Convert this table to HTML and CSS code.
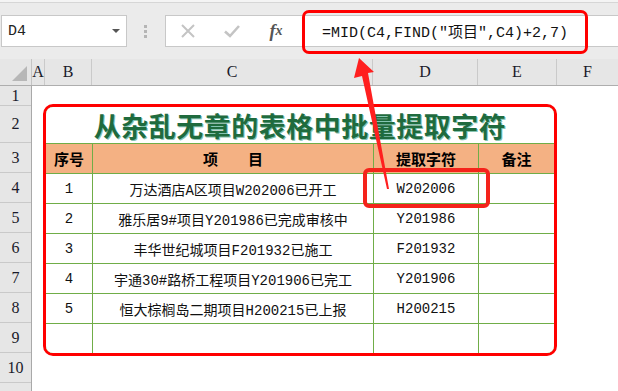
FILE: index.html
```html
<!DOCTYPE html>
<html lang="zh">
<head>
<meta charset="utf-8">
<title>MID FIND</title>
<link rel="stylesheet" href="styles.css">
</head>
<body>
<div class="app">
  <div class="topbar">
    <div class="namebox"><span class="nb-text">D4</span><span class="nb-caret"></span></div>
    <div class="vdots"><i></i><i></i><i></i></div>
    <div class="fbar">
      <div class="fbtn">
        <svg width="16" height="16" viewBox="0 0 16 16"><path d="M2 2 L14 14 M14 2 L2 14" stroke="#c4c4c4" stroke-width="2" fill="none"/></svg>
      </div>
      <div class="fbtn">
        <svg width="18" height="16" viewBox="0 0 18 16"><path d="M2 8.5 L7 13 L16 3" stroke="#c4c4c4" stroke-width="2.6" fill="none"/></svg>
      </div>
      <div class="fbtn fx">f<span>x</span></div>
      <div class="finput">=MID(C4,FIND("项目",C4)+2,7)</div>
    </div>
  </div>

  <div class="colhead">
    <div class="corner"><span class="tri"></span></div>
    <div class="ch c-a">A</div>
    <div class="ch c-b">B</div>
    <div class="ch c-c">C</div>
    <div class="ch c-d">D</div>
    <div class="ch c-e">E</div>
    <div class="ch c-f">F</div>
  </div>

  <div class="body">
    <div class="rowhead">
      <div class="rh r1">1</div>
      <div class="rh r2">2</div>
      <div class="rh">3</div>
      <div class="rh">4</div>
      <div class="rh">5</div>
      <div class="rh">6</div>
      <div class="rh">7</div>
      <div class="rh">8</div>
      <div class="rh">9</div>
      <div class="rh">10</div>
      <div class="rh"></div>
    </div>
    <div class="cells">
      <div class="tbl-wrap">
        <div class="tbl">
          <div class="title">从杂乱无章的表格中批量提取字符</div>
          <div class="th">序号</div>
          <div class="th">项　　目</div>
          <div class="th">提取字符</div>
          <div class="th">备注</div>

          <div class="td">1</div>
          <div class="td">万达酒店A区项目W202006已开工</div>
          <div class="td">W202006</div>
          <div class="td"></div>

          <div class="td">2</div>
          <div class="td">雅乐居9#项目Y201986已完成审核中</div>
          <div class="td">Y201986</div>
          <div class="td"></div>

          <div class="td">3</div>
          <div class="td">丰华世纪城项目F201932已施工</div>
          <div class="td">F201932</div>
          <div class="td"></div>

          <div class="td">4</div>
          <div class="td">宇通30#路桥工程项目Y201906已完工</div>
          <div class="td">Y201906</div>
          <div class="td"></div>

          <div class="td">5</div>
          <div class="td">恒大棕榈岛二期项目H200215已上报</div>
          <div class="td">H200215</div>
          <div class="td"></div>

          <div class="td"></div>
          <div class="td"></div>
          <div class="td"></div>
          <div class="td"></div>
        </div>
      </div>
    </div>
  </div>

  <div class="hl-formula"></div>
  <div class="hl-cell"></div>
  <svg class="arrow" width="50" height="140" viewBox="0 0 50 140">
    <polygon points="14,3 29,17 23,18 44,134 42,134 17,21 9,23" fill="#ff1f1f"/>
  </svg>
</div>
</body>
</html>
```

FILE: styles.css
```css
* { box-sizing: border-box; }
html, body { margin: 0; padding: 0; }
body { background: #ffffff; }

.app {
  position: relative;
  width: 618px;
  height: 391px;
  overflow: hidden;
  background: #f4f4f4;
  font-family: "Liberation Mono", "Noto Sans CJK SC", monospace;
  color: #000;
}

/* ---------- top formula area ---------- */
.topbar {
  margin-top: 2px;
  height: 57px;
  border-top: 1px solid #d6d6d6;
  background: #ebebeb;
  display: flex;
  align-items: flex-start;
  padding-top: 12px;
}
.namebox {
  margin-left: 1px;
  width: 126px;
  height: 32px;
  background: #fff;
  border: 1px solid #c8c8c8;
  display: flex;
  align-items: center;
  justify-content: space-between;
  padding: 0 6px 0 6px;
}
.nb-text {
  font-family: "Liberation Mono", monospace;
  font-size: 15px;
  color: #222;
}
.nb-caret {
  width: 0; height: 0;
  border-left: 4px solid transparent;
  border-right: 4px solid transparent;
  border-top: 4px solid #555;
}
.vdots {
  margin-left: 17px;
  height: 32px;
  display: flex;
  flex-direction: column;
  justify-content: center;
  gap: 2px;
}
.vdots i {
  display: block;
  width: 3px;
  height: 3px;
  background: #b5b5b5;
}
.fbar {
  margin-left: 18px;
  flex: 1;
  height: 32px;
  background: #fff;
  border: 1px solid #c8c8c8;
  border-right: none;
  display: flex;
  align-items: center;
}
.fbtn {
  width: 44px;
  height: 30px;
  display: flex;
  align-items: center;
  justify-content: center;
}
.fx {
  font-family: "Liberation Serif", serif;
  font-style: italic;
  font-size: 18px;
  color: #555;
  font-weight: 700;
}
.fx span { font-size: 14px; }
.finput {
  padding-left: 24px;
  font-size: 15px;
  color: #111;
  white-space: nowrap;
}

/* ---------- column header ---------- */
.colhead {
  height: 27px;
  display: flex;
  background: #e6e6e6;
  border-bottom: 1px solid #aeaeae;
}
.corner {
  position: relative;
  width: 32px;
  border-right: 1px solid #c4c4c4;
}
.tri {
  position: absolute;
  right: 4px;
  bottom: 4px;
  width: 0; height: 0;
  border-left: 15px solid transparent;
  border-bottom: 15px solid #b7b7b7;
}
.ch {
  font-family: "Liberation Serif", serif;
  font-size: 16px;
  color: #1a1a2a;
  display: flex;
  align-items: center;
  justify-content: center;
  border-right: 1px solid #cacaca;
}
.c-a { width: 13px; }
.c-b { width: 47px; }
.c-c { width: 281px; }
.c-d { width: 105px; }
.c-e { width: 79px; }
.c-f { flex: 1; border-right: none; }

/* ---------- body ---------- */
.body {
  display: flex;
  height: 305px;
}
.rowhead {
  width: 32px;
  background: #e6e6e6;
  border-right: 1px solid #a9a9a9;
}
.rh {
  height: 30px;
  border-bottom: 1px solid #c9c9c9;
  font-family: "Liberation Serif", serif;
  font-size: 16px;
  color: #1a1a2a;
  display: flex;
  align-items: center;
  justify-content: center;
}
.rh.r1 { height: 20px; }
.rh.r2 { height: 37px; }

.cells {
  flex: 1;
  background: #fff;
  padding: 18px 0 0 11px;
}
.tbl-wrap {
  width: 514px;
  border: 3px solid #ff0000;
  border-radius: 10px;
  overflow: hidden;
}
.tbl {
  display: grid;
  grid-template-columns: 46px 280px 104px 75px;
  grid-template-rows: 36px;
  grid-auto-rows: 29px;
  gap: 1px;
  background: #70ad47;
}
.title {
  grid-column: 1 / 5;
  background: #fff;
  display: flex;
  align-items: center;
  justify-content: center;
  font-family: "Noto Sans CJK SC", sans-serif;
  font-weight: 700;
  font-size: 27px;
  color: #1f6b3e;
  text-shadow: 1px 1px 0 #86c4b2;
  letter-spacing: 0.5px;
}
.th {
  background: #f4b183;
  display: flex;
  align-items: center;
  justify-content: center;
  font-family: "Noto Sans CJK SC", sans-serif;
  font-weight: 700;
  font-size: 15px;
  color: #000;
}
.td {
  background: #fff;
  display: flex;
  align-items: center;
  justify-content: center;
  font-size: 14px;
  white-space: nowrap;
  color: #111;
}

/* ---------- overlays ---------- */
.hl-formula {
  position: absolute;
  left: 302px;
  top: 10px;
  width: 286px;
  height: 44px;
  border: 3px solid #ff0000;
  border-radius: 7px;
}
.hl-cell {
  position: absolute;
  left: 363px;
  top: 168px;
  width: 127px;
  height: 40px;
  border: 4px solid #f5231b;
  border-radius: 6px;
}
.arrow {
  position: absolute;
  left: 345px;
  top: 55px;
}
```
